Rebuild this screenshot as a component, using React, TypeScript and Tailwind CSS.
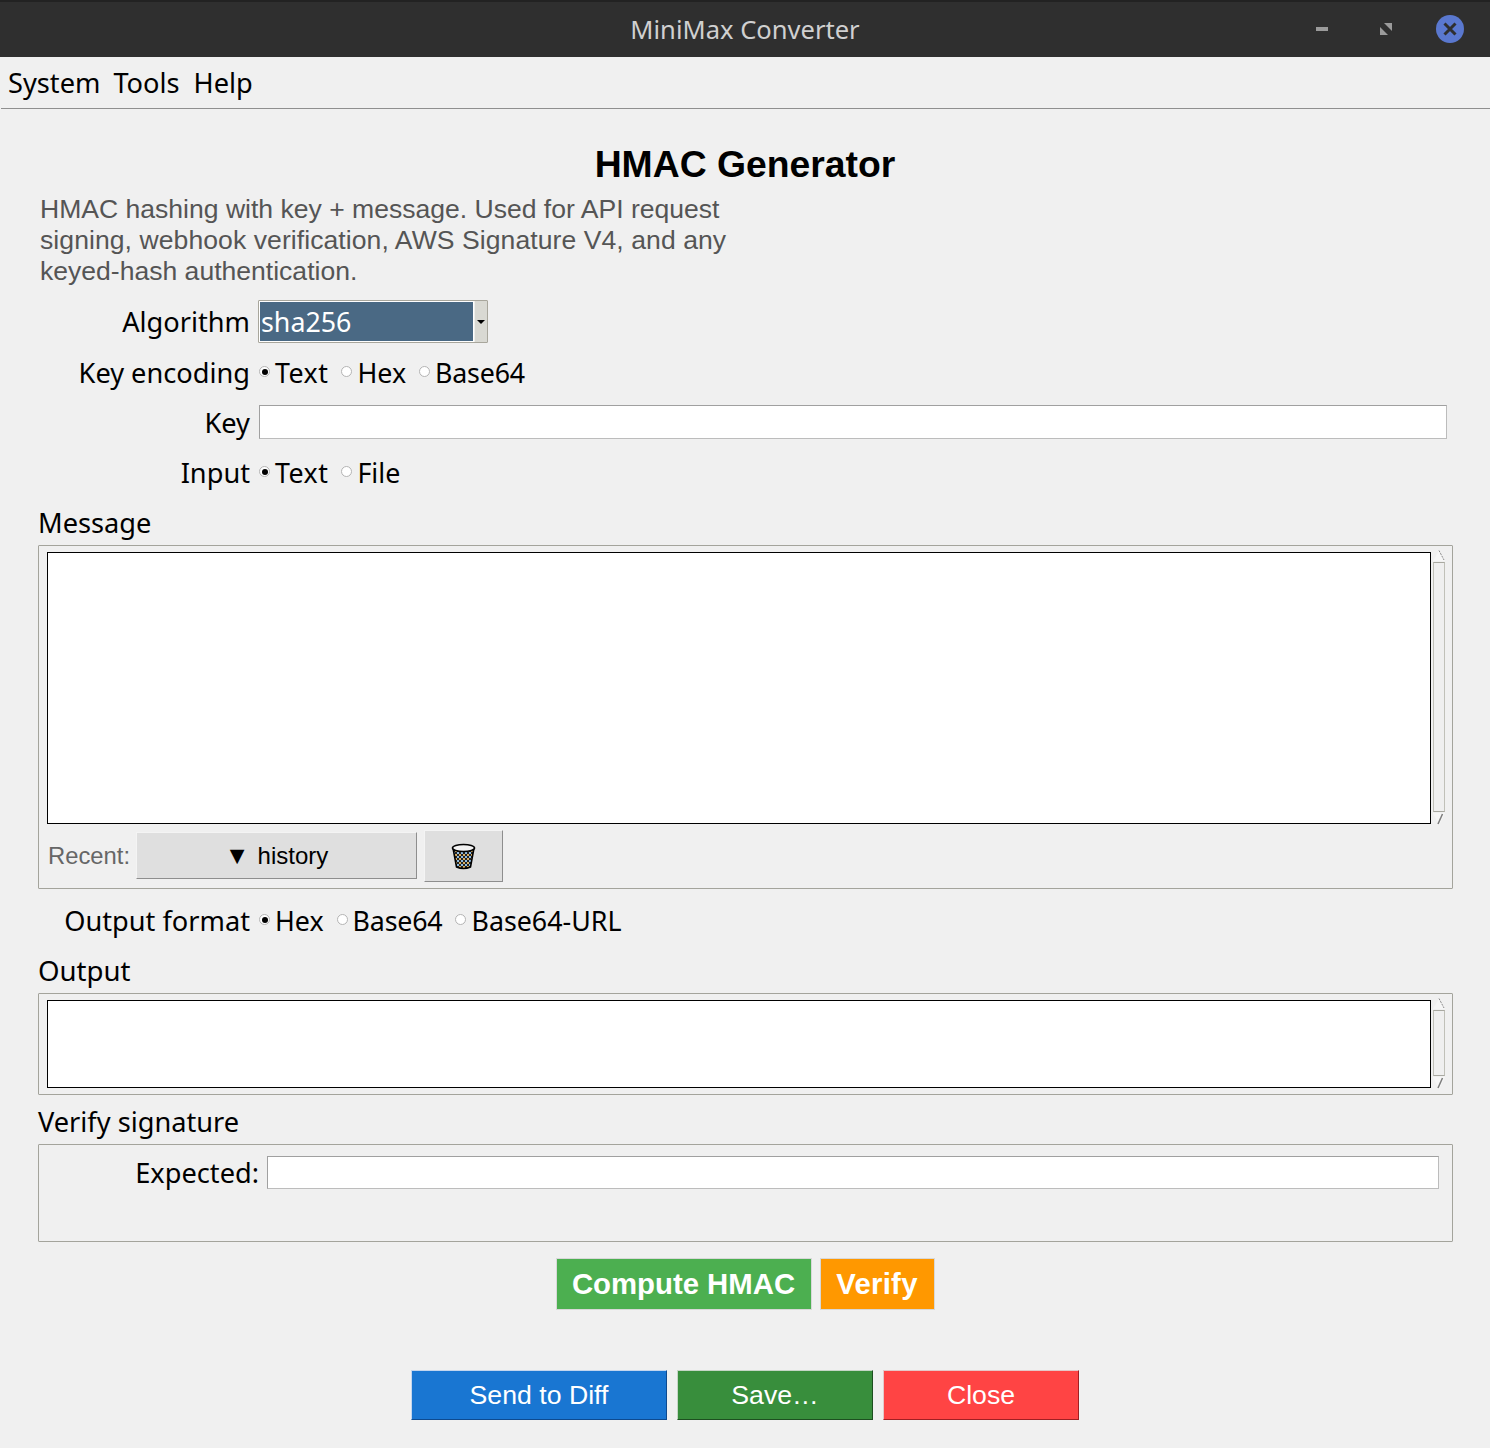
import React from "react";

const noto = "font-['Noto_Sans',sans-serif]";
const lib = "font-['Liberation_Sans',Arial,sans-serif]";

function Radio({ on, label, labelClass = "", tight }: { on?: boolean; label: string; labelClass?: string; tight?: boolean }) {
  return (
    <span className={`${tight ? "mr-[13px]" : "mr-[14px]"} flex items-center text-[26.8px]`}>
      <span className="mr-[5px] mt-[-2px] flex h-[11px] w-[11px] items-center justify-center rounded-full border border-[#b4b4b4] bg-white">
        {on && <span className="h-[6px] w-[6px] rounded-full bg-black" />}
      </span>
      <span className={labelClass}>{label}</span>
    </span>
  );
}

function Row({ label, h, children, className = "" }: { label: string; h: string; children: React.ReactNode; className?: string }) {
  return (
    <div className={`flex items-center ${h} ${className}`}>
      <div className="w-[250px] shrink-0 text-right">{label}</div>
      <div className="ml-[9px] flex flex-1 items-center">{children}</div>
    </div>
  );
}

function Scrollbar() {
  return (
    <div className="mb-[-2px] ml-[2px] mt-[-2px] flex w-[12px] flex-col">
      <svg width="12" height="12" viewBox="0 0 12 12" className="shrink-0">
        <path d="M6 0.5 L12 11 H0 Z" fill="#f6f6f6" />
        <path d="M6 0.5 L11 10" stroke="#8a8a8a" strokeWidth="1" strokeDasharray="2 1" fill="none" />
      </svg>
      <div className="flex-1 border-x border-y border-x-[#c0c0b8] border-y-[#a8a8a0] bg-[#efefef]" />
      <svg width="12" height="14" viewBox="0 0 12 14" className="shrink-0">
        <path d="M0 1 H12 L6 13 Z" fill="#f6f6f6" />
        <path d="M9.5 2 L5 12" stroke="#7c7c7c" strokeWidth="1.5" fill="none" />
      </svg>
    </div>
  );
}

function Trash() {
  return (
    <svg width="25" height="28" viewBox="0 0 25 28">
      <defs>
        <pattern id="mesh" width="4" height="4" patternUnits="userSpaceOnUse">
          <rect width="4" height="4" fill="#222222" />
          <rect width="2" height="2" fill="#d8ae62" />
          <rect x="2" y="2" width="2" height="2" fill="#8fbce0" />
        </pattern>
      </defs>
      <path d="M2 6 L5.5 25 Q12.5 28 19.5 25 L23 6 Z" fill="url(#mesh)" stroke="#000" strokeWidth="1.6" />
      <ellipse cx="12.5" cy="6" rx="11" ry="3.5" fill="#f2f2f2" stroke="#000" strokeWidth="1.6" />
    </svg>
  );
}

export default function App() {
  return (
    <div className={`${noto} h-[1448px] w-[1490px] overflow-hidden bg-[#f0f0f0] text-[27.2px] leading-none text-black`}>
      <header className="relative flex h-[57px] items-center justify-center border-t-[2px] border-t-[#222] bg-[#2f2f2f] text-[25.55px] text-[#d0d0d0]">
        <span>MiniMax Converter</span>
        <div className="absolute right-[26px] top-[13px] flex items-center">
          <span className="mr-[52px] block h-[4px] w-[12px] bg-[#9b9b9b]" />
          <svg width="12" height="12" viewBox="0 0 12 12" className="mr-[44px]">
            <path d="M4 0 H12 V8 Z M0 4 L8 12 H0 Z" fill="#9b9b9b" />
          </svg>
          <span className="flex h-[28px] w-[28px] items-center justify-center rounded-full bg-[#5a78cf]">
            <svg width="14" height="14" viewBox="0 0 14 14">
              <path d="M1.5 1.5 L12.5 12.5 M12.5 1.5 L1.5 12.5" stroke="#2f2f2f" strokeWidth="3" />
            </svg>
          </span>
        </div>
      </header>

      <nav className="ml-[1px] flex h-[52px] items-center border-b border-b-[#8f8f8f] pl-[7px]">
        <span className="mr-[13px]">System</span>
        <span className="mr-[14px]">Tools</span>
        <span>Help</span>
      </nav>

      <main className="px-[38px]">
        <h1 className={`${lib} mt-[33px] h-[44px] text-center text-[37.33px] font-bold leading-[44px]`}>HMAC Generator</h1>
        <p className={`${lib} mt-[8px] w-[720px] pl-[2px] text-[26.55px] leading-[31px] text-[#555555]`}>
          HMAC hashing with key + message. Used for API request
          <br />
          <span className="tracking-[0.07px]">signing, webhook verification, AWS Signature V4, and any</span>
          <br />
          keyed-hash authentication.
        </p>

        <div className="ml-[-38px] mr-[-38px] mt-[13px]">
          <Row label="Algorithm" h="h-[43px]">
            <div className="ml-[-1px] flex h-[43px] w-[230px] rounded-[1px] border border-[#a8a69c] bg-[#d9d9d3]">
              <div className="flex flex-1 items-center border border-white bg-[#4a6984] pl-[1px] pt-[2px] text-[26.8px] text-white">sha256</div>
              <div className="flex w-[13px] items-center justify-center border-l border-l-[#f0f0ec]">
                <span className="h-0 w-0 border-x-[4px] border-t-[4px] border-x-transparent border-t-black" />
              </div>
            </div>
          </Row>
          <Row label="Key encoding" h="h-[50px]" className="mt-[4px] pt-[2px]">
            <Radio on tight labelClass="tracking-[0.5px]" label="Text" />
            <Radio tight label="Hex" />
            <Radio labelClass="tracking-[-0.2px]" label="Base64" />
          </Row>
          <div className="flex h-[50px] items-center pt-[1px]">
            <div className="w-[250px] shrink-0 text-right">Key</div>
            <div className="mb-[2px] ml-[9px] h-[34px] w-[1188px] border border-[#bcbcbc] border-l-[#a0a0a0] border-t-[#a0a0a0] bg-white" />
          </div>
          <Row label="Input" h="h-[50px]" className="pt-[2px]">
            <Radio on tight labelClass="tracking-[0.5px]" label="Text" />
            <Radio label="File" />
          </Row>
        </div>

        <div className="flex h-[50px] items-center pt-[2px]">Message</div>
        <section className="mt-[-2px] h-[344px] w-[1415px] rounded-[1px] border border-[#a4a49c] pl-[8px] pr-[6px] pt-[6px]">
          <div className="flex h-[272px]">
            <div className="w-[1384px] border border-black bg-white" />
            <Scrollbar />
          </div>
          <div className="mt-[6px] flex h-[52px] items-center">
            <span className={`${lib} ml-[1px] w-[88px] text-[23.8px] text-[#666666]`}>Recent:</span>
            <div className={`${lib} mb-[1px] mr-[7px] flex h-[47px] w-[281px] items-center justify-center border border-[#f4f4f4] border-b-[#8e8e8e] border-r-[#8e8e8e] bg-[#dfdfdf] text-[24px]`}>
              <span className="mr-[8px] text-[25px]">▼</span>history
            </div>
            <div className="flex h-[52px] w-[79px] items-center justify-center border border-[#f4f4f4] border-b-[#8e8e8e] border-r-[#8e8e8e] bg-[#dfdfdf]">
              <Trash />
            </div>
          </div>
        </section>

        <div className="ml-[-38px] mt-[7px]">
          <Row label="Output format" h="h-[50px]">
            <Radio on tight label="Hex" />
            <Radio tight labelClass="tracking-[-0.2px]" label="Base64" />
            <Radio label="Base64-URL" />
          </Row>
        </div>
        <div className="flex h-[50px] items-center text-[27.6px]">Output</div>
        <section className="mt-[-3px] h-[102px] w-[1415px] rounded-[1px] border border-[#a4a49c] pl-[8px] pr-[6px] pt-[6px]">
          <div className="flex h-[88px]">
            <div className="w-[1384px] border border-black bg-white" />
            <Scrollbar />
          </div>
        </section>

        <div className="flex h-[50px] items-center pt-[4px]">Verify signature</div>
        <section className="mt-[-1px] flex h-[98px] w-[1415px] items-start rounded-[1px] border border-[#a4a49c] pt-[11px]">
          <div className="flex h-[33px] items-center">
            <span className="w-[220px] text-right">Expected:</span>
            <div className="ml-[8px] h-[33px] w-[1172px] border border-[#bcbcbc] border-l-[#a0a0a0] border-t-[#a0a0a0] bg-white" />
          </div>
        </section>

        <div className={`${lib} mt-[16px] flex h-[52px] justify-center text-[29.33px] font-bold text-white`}>
          <div className="flex h-[52px] w-[256px] items-center justify-center border border-[#d8d8d8] bg-[#4caf50]">Compute HMAC</div>
          <div className="ml-[8px] flex h-[52px] w-[115px] items-center justify-center border border-[#d8d8d8] bg-[#ff9800] tracking-[0.25px]">Verify</div>
        </div>

        <div className={`${lib} mt-[60px] flex h-[50px] justify-center text-[26.67px] text-white`}>
          <div className="flex h-[50px] w-[256px] items-center justify-center border border-[#c4d6ee] border-b-[#0d4a8f] border-r-[#0d4a8f] bg-[#1976d2]">Send to Diff</div>
          <div className="ml-[10px] flex h-[50px] w-[196px] items-center justify-center border border-[#c6d6c6] border-b-[#1d4f20] border-r-[#1d4f20] bg-[#388e3c]">Save…</div>
          <div className="ml-[10px] flex h-[50px] w-[196px] items-center justify-center border border-[#e4c8c8] border-b-[#a01f22] border-r-[#a01f22] bg-[#ff4444]">Close</div>
        </div>
      </main>
    </div>
  );
}
